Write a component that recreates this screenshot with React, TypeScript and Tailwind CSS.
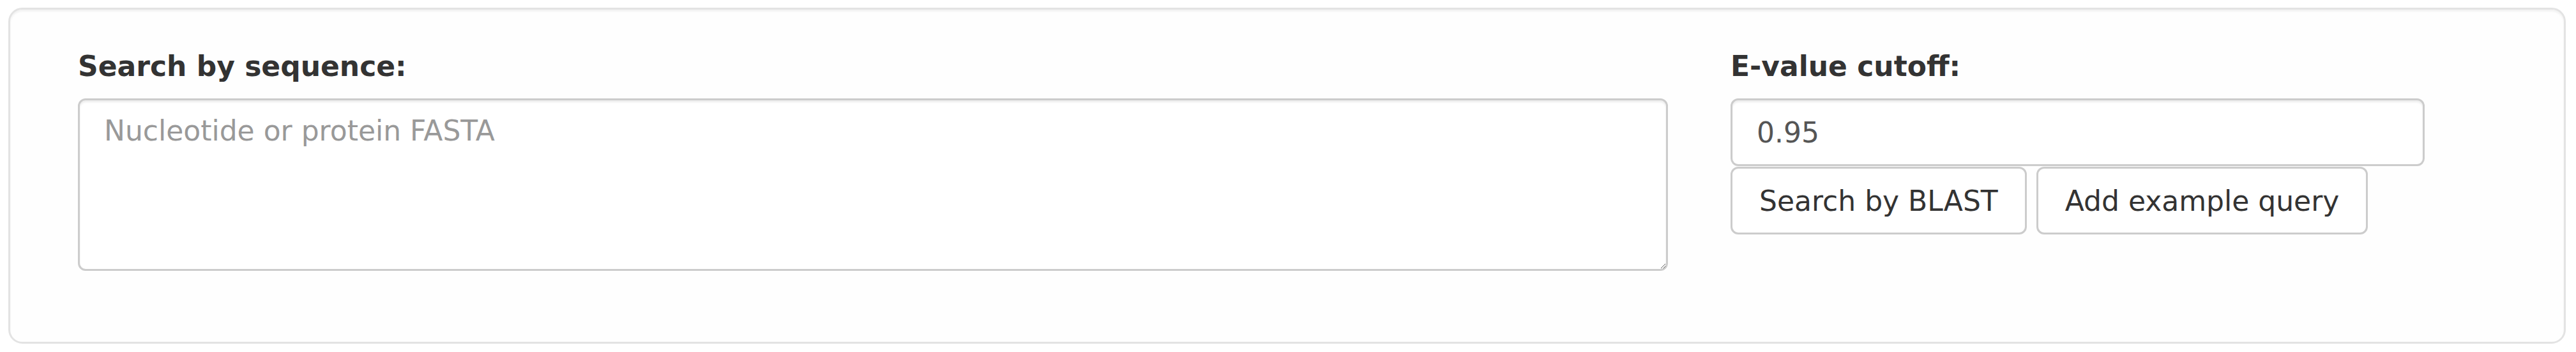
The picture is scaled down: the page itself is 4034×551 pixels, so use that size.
export default function App() {
  return (
    <div className="min-h-[551px] bg-white pl-[13px] pr-[16px] pt-[12px] font-['DejaVu_Sans',sans-serif] text-[44px] leading-[63px] text-[#333]">
      <div className="flex h-[526px] gap-[98px] rounded-[22px] border-[3px] border-[#e3e3e3] bg-[#fefefe] pl-[106px] pt-[57px] shadow-[inset_0_3px_3px_rgba(0,0,0,0.05)]">
        {/* sequence column */}
        <div className="flex w-[2490px] flex-col">
          <label className="mb-[19px] font-bold text-[#333]">Search by sequence:</label>
          <textarea
            placeholder="Nucleotide or protein FASTA"
            className="h-[270px] w-full rounded-[12px] border-[3px] border-[#ccc] bg-white px-[38px] pt-[16px] text-[#555] shadow-[inset_0_3px_3px_rgba(0,0,0,0.075)] outline-none placeholder:text-[#999]"
          />
        </div>

        {/* e-value column */}
        <div className="flex w-[1087px] flex-col">
          <label className="mb-[19px] font-bold text-[#333]">E-value cutoff:</label>
          <input
            type="text"
            defaultValue="0.95"
            className="h-[106px] w-full rounded-[12px] border-[3px] border-[#ccc] bg-white px-[38px] text-[#555] shadow-[inset_0_3px_3px_rgba(0,0,0,0.075)] outline-none"
          />
          <div className="mt-[1px] flex gap-[15px]">
            <button className="h-[106px] rounded-[12px] border-[3px] border-[#ccc] bg-white px-[42px] text-[#333]">
              Search by BLAST
            </button>
            <button className="h-[106px] rounded-[12px] border-[3px] border-[#ccc] bg-white px-[42px] text-[#333]">
              Add example query
            </button>
          </div>
        </div>
      </div>
    </div>
  )
}
